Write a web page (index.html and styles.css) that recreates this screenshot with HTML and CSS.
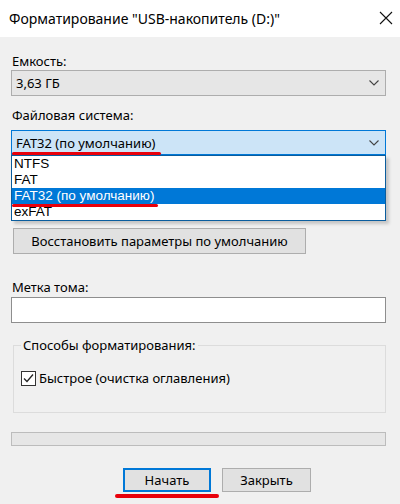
FILE: index.html
```html
<!DOCTYPE html>
<html lang="ru">
<head>
  <meta charset="UTF-8">
  <title>Форматирование</title>
  <link rel="stylesheet" href="styles.css">
</head>
<body>
  <div class="titlebar">
    <span class="title">Форматирование "USB-накопитель (D:)"</span>
    <svg class="close" width="14" height="14" viewBox="0 0 14 14">
      <path d="M1 1L13 13M13 1L1 13" stroke="#111" stroke-width="1.1" fill="none"/>
    </svg>
  </div>

  <div class="dialog">
    <div class="label label-first">Емкость:</div>
    <div class="combo">
      <span>3,63 ГБ</span>
      <svg class="chev" width="10" height="6" viewBox="0 0 10 6"><path d="M0.5 0.5L5 5L9.5 0.5" stroke="#444" stroke-width="1.1" fill="none"/></svg>
    </div>

    <div class="label label-fs">Файловая система:</div>
    <div class="fs-field">
      <div class="combo combo-open">
        <span>FAT32 (по умолчанию)</span>
        <svg class="chev" width="10" height="6" viewBox="0 0 10 6"><path d="M0.5 0.5L5 5L9.5 0.5" stroke="#444" stroke-width="1.1" fill="none"/></svg>
      </div>
      <span class="mark mark-combo"></span>
      <ul class="dropdown">
        <li>NTFS</li>
        <li>FAT</li>
        <li class="selected">FAT32 (по умолчанию)</li>
        <li>exFAT</li>
      </ul>
      <span class="mark mark-item"></span>
    </div>

    <button class="btn btn-reset">Восстановить параметры по умолчанию</button>

    <div class="label label-vol">Метка тома:</div>
    <div class="textbox"></div>

    <fieldset class="group">
      <legend>Способы форматирования:</legend>
      <label class="check-row">
        <span class="checkbox">
          <svg width="13" height="13" viewBox="0 0 13 13"><path d="M2 6.5L5 9.5L11 2.5" stroke="#222" stroke-width="1.3" fill="none"/></svg>
        </span>
        Быстрое (очистка оглавления)
      </label>
    </fieldset>

    <div class="progress"></div>

    <div class="actions">
      <div class="btn-wrap">
        <button class="btn btn-default">Начать</button>
        <span class="mark mark-start"></span>
      </div>
      <button class="btn btn-close">Закрыть</button>
    </div>
  </div>
</body>
</html>
```

FILE: styles.css
```css
body {
  margin: 0;
  width: 400px;
  height: 504px;
  overflow: hidden;
  background: #f0f0f0;
  font-family: "Noto Sans", "Open Sans", sans-serif;
  font-size: 13px;
  color: #000;
}
.titlebar {
  height: 37px;
  background: #fff;
  display: flex;
  align-items: center;
  padding: 0 7px 0 9px;
}
.title {
  font-size: 14px;
  flex: 1;
  margin-top: -1px;
}
.close {
  margin-top: -2px;
}
.dialog {
  padding: 0 14px 0 11px;
}
.label {
  height: 16px;
  line-height: 16px;
  padding-left: 1px;
}
.label-first {
  margin-top: 16px;
}
.combo {
  height: 26px;
  box-sizing: border-box;
  border: 1px solid #adadad;
  background: #e6e6e6;
  display: flex;
  align-items: center;
  justify-content: space-between;
  padding: 0 5px 0 4px;
  margin-top: 1px;
}
.chev {
  margin-right: 1px;
}
.label-fs {
  margin-top: 11px;
}
.fs-field {
  position: relative;
  margin-top: 7px;
}
.combo-open {
  margin-top: 0;
  height: 25px;
  background: #cce4f7;
  border-color: #0078d7;
}
.dropdown {
  margin: 0;
  padding: 0;
  list-style: none;
  background: #fff;
  border: 1px solid #0a5d9e;
  box-shadow: 3px 3px 3px rgba(0, 0, 0, 0.18);
}
.dropdown li {
  height: 16px;
  line-height: 16px;
  padding-left: 2px;
  font-family: "Liberation Sans", Arial, sans-serif;
  font-size: 13.5px;
}
.dropdown li.selected {
  background: #0078d7;
  color: #fff;
}
.mark {
  position: absolute;
  height: 3px;
  background: #e8000b;
  border-radius: 2px;
}
.mark-combo {
  left: 1px;
  top: 22px;
  width: 149px;
}
.mark-item {
  left: 1px;
  top: 74px;
  width: 146px;
}
.btn {
  font-family: inherit;
  font-size: 13px;
  color: #000;
  background: #e1e1e1;
  border: 1px solid #adadad;
  padding: 0;
  height: 26px;
}
.btn-reset {
  display: block;
  margin: 7px 0 0 2px;
  width: 293px;
}
.label-vol {
  margin-top: 25px;
}
.textbox {
  margin-top: 2px;
  height: 26px;
  box-sizing: border-box;
  border: 1px solid #8e8e8e;
  background: #fff;
}
.group {
  margin: 14px 0 0 2px;
  padding: 4px 0 0 7px;
  border: 1px solid #dcdcdc;
  height: 76px;
  box-sizing: border-box;
}
.group legend {
  padding: 0 2px;
  line-height: 16px;
}
.check-row {
  display: flex;
  align-items: center;
  gap: 3px;
  height: 16px;
  margin-top: 13px;
}
.checkbox {
  width: 15px;
  height: 15px;
  box-sizing: border-box;
  border: 1px solid #333;
  background: #fff;
  display: flex;
  align-items: center;
  justify-content: center;
}
.progress {
  margin-top: 19px;
  height: 14px;
  box-sizing: border-box;
  border: 1px solid #bcbcbc;
  background: #e6e6e6;
}
.actions {
  display: flex;
  gap: 11px;
  margin-top: 22px;
  padding-left: 112px;
}
.btn-wrap {
  position: relative;
}
.btn-default {
  width: 88px;
  height: 24px;
  border: 2px solid #0078d7;
  display: block;
}
.btn-close {
  width: 89px;
  height: 24px;
}
.mark-start {
  left: -8px;
  top: 26px;
  width: 104px;
  height: 4px;
}
```
